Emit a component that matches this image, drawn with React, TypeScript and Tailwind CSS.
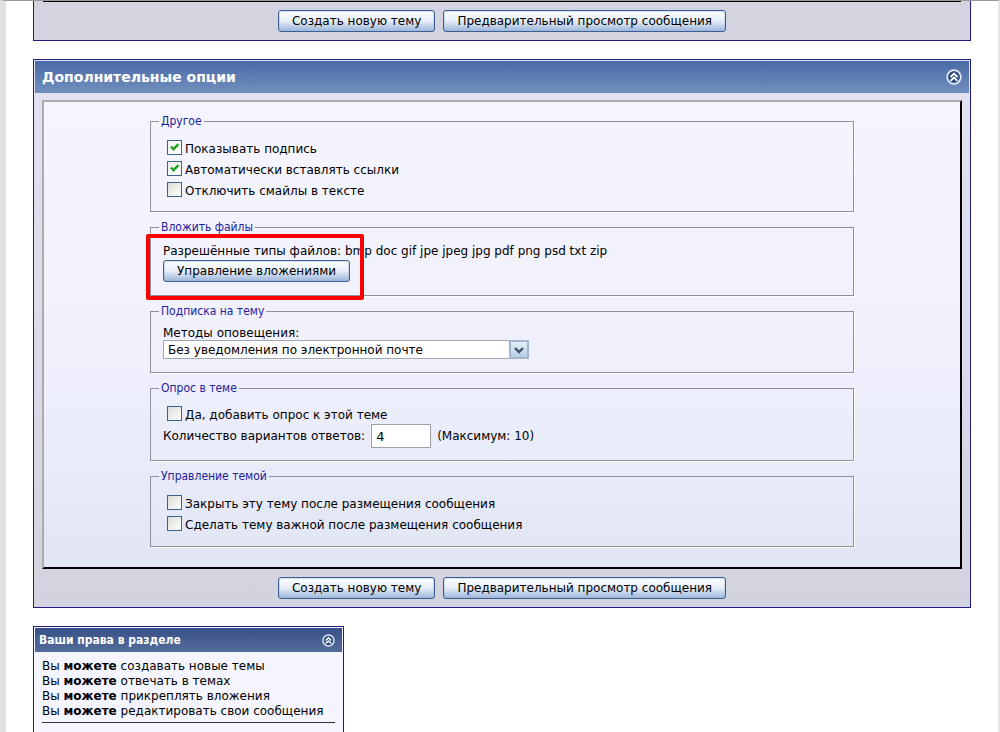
import React from "react";

function CollapseIcon({ size }: { size: number }) {
  return (
    <svg width={size} height={size} viewBox="0 0 16 16" fill="none" aria-hidden="true">
      <circle cx="8" cy="8" r="6.8" fill="#2f4c80" stroke="#e4ebfa" strokeWidth="1.7" />
      <path d="M4.5 8 8 4.7 11.5 8M4.5 11.8 8 8.5l3.500 3.300" stroke="#ffffff" strokeWidth="1.8" />
    </svg>
  );
}

function XpButton({ children }: { children: React.ReactNode }) {
  return (
    <button
      type="button"
      className="h-[22px] rounded-[3px] border border-[#3c5f94] bg-gradient-to-b from-white via-[#e6eef8] to-[#9db6da] px-[13px] text-[12px] leading-[18px] whitespace-nowrap text-black shadow-[inset_0_0_0_1px_#9db4d466]"
    >
      {children}
    </button>
  );
}

function ButtonBar() {
  return (
    <div className="flex flex-wrap justify-center gap-2 pt-2 pb-[7px]">
      <XpButton>Создать новую тему</XpButton>
      <XpButton>Предварительный просмотр сообщения</XpButton>
    </div>
  );
}

function Check({ label, checked = false }: { label: string; checked?: boolean }) {
  return (
    <label className="ml-1 flex h-[21px] items-start gap-[3px]">
      <span className="grid size-[15px] shrink-0">
        <input
          type="checkbox"
          defaultChecked={checked}
          className="peer size-[15px] appearance-none border border-[#35648f] bg-gradient-to-br from-[#dcdcd7] to-white [grid-area:1/1] checked:from-[#f0f0ec]"
        />
        <svg
          viewBox="0 0 15 15"
          className="pointer-events-none invisible size-[15px] [grid-area:1/1] peer-checked:visible"
          fill="none"
          aria-hidden="true"
        >
          <path d="M4 6.500 6.500 9.200 11.500 4.200" stroke="#21a121" strokeWidth="2.400" />
        </svg>
      </span>
      <span className="leading-[19px]">{label}</span>
    </label>
  );
}

function Group({ title, className, children }: { title: string; className: string; children: React.ReactNode }) {
  return (
    <fieldset className={"min-w-0 border border-[#90909a] px-3 shadow-[1px_1px_0_#ffffff] " + className}>
      <legend className="-ml-1 px-[2px] font-['DejaVu_Sans_Condensed','DejaVu_Sans',sans-serif] text-[12px] leading-[14px] text-[#22229c]">
        {title}
      </legend>
      {children}
    </fieldset>
  );
}

export default function App() {
  return (
    <div className="flex min-h-screen flex-col border-t border-r-2 border-l-[6px] border-t-[#999999] border-r-[#e6e6e6] border-l-[#e1e1e1] bg-white pr-[27px] pl-[27px] font-['DejaVu_Sans',sans-serif] text-[12px] text-black">
      <section className="border border-t-0 border-[#1e1e82] bg-[#d4d4e0] px-[9px]">
        <div className="border-t border-black" />
        <ButtonBar />
        <div className="h-px" />
      </section>

      <section className="mt-[18px] border border-[#1e1e82] bg-gradient-to-b from-[#e2e2f3] to-[#d3d3df] p-px">
        <header className="flex h-8 items-center justify-between bg-gradient-to-b from-[#4a6aa5] to-[#738fbf] pr-[7px] pl-[7px]">
          <h2 className="text-[14px] leading-[18px] font-bold text-white">Дополнительные опции</h2>
          <button type="button" aria-label="Свернуть дополнительные опции">
            <CollapseIcon size={16} />
          </button>
        </header>

        <div className="mx-[7px] mt-[7px] border-2 border-t-[#acacac] border-r-black border-b-black border-l-[#acacac] bg-gradient-to-b from-[#f5f5ff] via-[#f1f1fd] to-[#e1e6f4] px-4 pt-3 pb-[20px]">
          <div className="mx-auto flex w-full max-w-[704px] flex-col gap-2">
            <Group title="Другое" className="pt-3 pb-2">
              <Check label="Показывать подпись" checked />
              <Check label="Автоматически вставлять ссылки" checked />
              <Check label="Отключить смайлы в тексте" />
            </Group>

            <Group title="Вложить файлы" className="pt-2 pb-[13px]">
              <div className="relative">
                <p className="leading-[18px]">
                  Разрешённые типы файлов: bmp doc gif jpe jpeg jpg pdf png psd txt zip
                </p>
                <div className="flex">
                  <XpButton>Управление вложениями</XpButton>
                </div>
                <div className="pointer-events-none absolute -top-2 -left-[17px] h-[66px] w-[218px] rounded-[2px] border-4 border-[#fb0000]" />
              </div>
            </Group>

            <Group title="Подписка на тему" className="pt-2 pb-[13px]">
              <label htmlFor="notify" className="block leading-[14px]">
                Методы оповещения:
              </label>
              <div className="grid w-full max-w-[366px]">
                <select
                  id="notify"
                  className="h-[19px] appearance-none border border-[#a0a8b4] bg-white pr-5 pl-1 text-[12px] leading-[16px] [grid-area:1/1]"
                >
                  <option>Без уведомления по электронной почте</option>
                </select>
                <span className="pointer-events-none grid h-[19px] w-5 place-items-center self-center justify-self-end border-2 border-[#a3b5cc] bg-gradient-to-b from-[#e4f0fb] to-[#b4cde6] [grid-area:1/1]">
                  <svg width="10" height="8" viewBox="0 0 10 8" fill="none" aria-hidden="true">
                    <path d="M1 2 5 6l4-4" stroke="#3c4f66" strokeWidth="2.300" />
                  </svg>
                </span>
              </div>
            </Group>

            <Group title="Опрос в теме" className="pt-[11px] pb-3">
              <Check label="Да, добавить опрос к этой теме" />
              <div className="-mt-[3px] flex items-center gap-[6px]">
                <label htmlFor="poll">Количество вариантов ответов:</label>
                <input
                  id="poll"
                  defaultValue="4"
                  className="h-6 w-[60px] border border-[#a0a0a8] bg-white px-1 text-[13px]"
                />
                <span>(Максимум: 10)</span>
              </div>
            </Group>

            <Group title="Управление темой" className="pt-3 pb-[9px]">
              <Check label="Закрыть эту тему после размещения сообщения" />
              <Check label="Сделать тему важной после размещения сообщения" />
            </Group>
          </div>
        </div>
        <ButtonBar />
      </section>

      <section className="mt-[18px] flex w-full max-w-[311px] flex-1 flex-col border border-b-0 border-[#1e1e82] bg-[#f5f5ff]">
        <header className="mx-px mt-px flex h-6 items-center justify-between bg-gradient-to-b from-[#385086] to-[#546c9c] pr-[7px] pl-1">
          <h3 className="font-['DejaVu_Sans_Condensed','DejaVu_Sans',sans-serif] text-[12px] leading-[16px] font-bold text-white">
            Ваши права в разделе
          </h3>
          <button type="button" aria-label="Свернуть права">
            <CollapseIcon size={13} />
          </button>
        </header>
        <ul className="mx-2 border-b border-[#333333] pt-[7px] pb-[3px] text-[12px] leading-[15px] whitespace-nowrap">
          {["создавать новые темы", "отвечать в темах", "прикреплять вложения", "редактировать свои сообщения"].map(
            (right) => (
              <li key={right}>
                Вы <b>можете</b> {right}
              </li>
            ),
          )}
        </ul>
      </section>
    </div>
  );
}
